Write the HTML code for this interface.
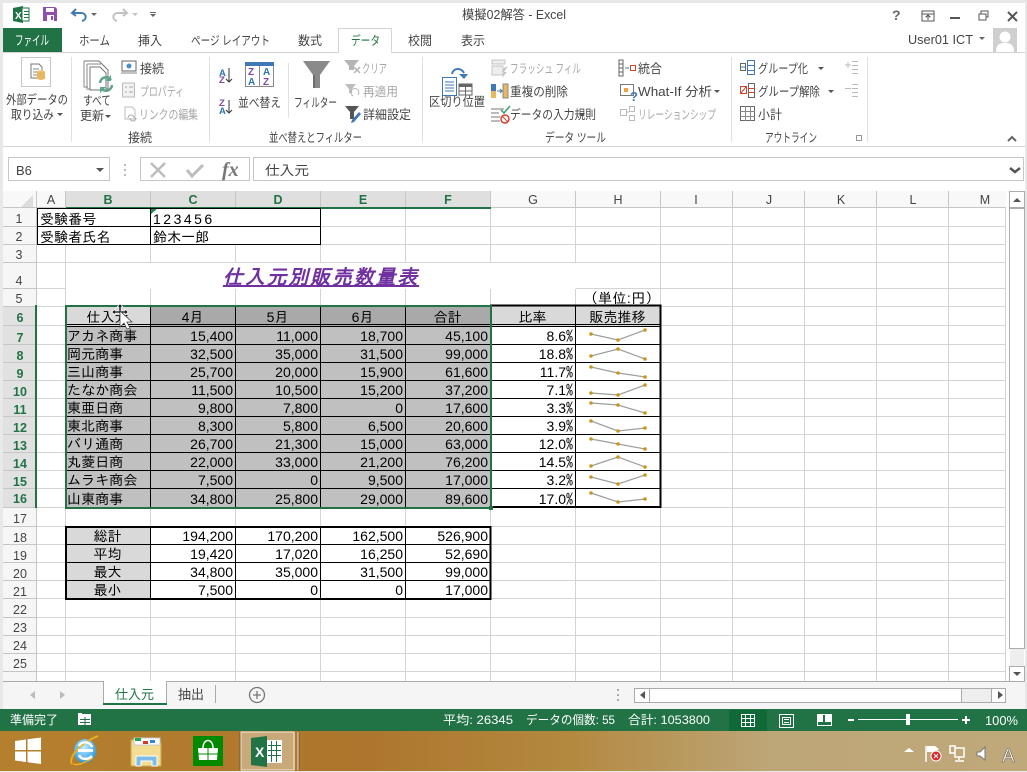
<!DOCTYPE html>
<html lang="ja"><head><meta charset="utf-8"><title>模擬02解答 - Excel</title>
<style>
html,body{margin:0;padding:0;width:1027px;height:772px;overflow:hidden;background:#fff}
svg{position:absolute;left:0;top:0}
svg text{font-family:"Liberation Sans","Noto Sans CJK JP",sans-serif;font-size:12.5px;fill:#444}
svg .g{fill:#a6a6a6}
svg .w{fill:#fff;font-size:13px}
svg .h{font-size:12.5px;fill:#444;text-anchor:middle}
svg .s{font-size:12.5px;fill:#217346;font-weight:bold;text-anchor:middle}
table{position:absolute;left:37px;top:208px;border-collapse:collapse;table-layout:fixed;width:624px;font-family:"Liberation Sans","IPAGothic",sans-serif;font-size:14px;color:#000}
td{padding:0 3px 0 1px;vertical-align:bottom;line-height:16px;white-space:nowrap;overflow:hidden;text-align:right}
td.l{text-align:left;letter-spacing:.1px}
td.c{text-align:center;letter-spacing:0}
tr.u td{padding-bottom:1px}
td i{font-style:normal;font-family:"IPAGothic",sans-serif}
.m{letter-spacing:1.5px}
.a{background:#d9d9d9}.b{background:#a9a9a9}.d{background:#c0c0c0}.e{background:#fff}
tr td.title{font-size:20px;line-height:22px;font-family:"IPAGothic",sans-serif;font-weight:bold;font-style:italic;text-decoration:underline;color:#7030a0;text-align:center;letter-spacing:1.8px;background:#fff;padding:0 0 1px 0}
</style></head><body>
<svg width="1027" height="772" shape-rendering="crispEdges">
<path stroke="#d4d4d4" fill="none" d="M37 226.5H1006M37 244.5H1006M37 262.5H1006M37 288.5H1006M37 306.5H1006M37 325.5H1006M37 344.5H1006M37 362.5H1006M37 380.5H1006M37 398.5H1006M37 416.5H1006M37 434.5H1006M37 452.5H1006M37 470.5H1006M37 488.5H1006M37 507.5H1006M37 526.5H1006M37 544.5H1006M37 562.5H1006M37 580.5H1006M37 598.5H1006M37 617.5H1006M37 635.5H1006M37 653.5H1006M37 671.5H1006M65.5 208V681M150.5 208V681M235.5 208V681M320.5 208V681M405.5 208V681M490.5 208V681M575.5 208V681M660.5 208V681M732.5 208V681M804.5 208V681M876.5 208V681M948.5 208V681M1005.5 208V681"/>
</svg>
<table>
<colgroup><col style="width:29px"><col style="width:85px"><col style="width:85px"><col style="width:85px"><col style="width:85px"><col style="width:85px"><col style="width:85px"><col style="width:85px"></colgroup>
<tr style="height:19px"><td colspan="2" class="l e" style="padding-left:3px">受験番号</td><td colspan="2" class="l e" style="padding-left:2px;letter-spacing:2.5px">123456</td><td colspan="4" style="background:none"></td></tr>
<tr style="height:18px"><td colspan="2" class="l e" style="padding-left:3px">受験者氏名</td><td colspan="2" class="l e" style="padding-left:2px">鈴木一郎</td><td colspan="4" style="background:none"></td></tr>
<tr style="height:18px"><td colspan="8"></td></tr>
<tr style="height:26px"><td></td><td colspan="6" class="title">仕入元別販売数量表</td><td></td></tr>
<tr class="u" style="height:18px"><td colspan="7"></td><td style="letter-spacing:.4px;padding-right:1px">（単位:円）</td></tr>
<tr class="u" style="height:19px"><td></td><td class="c a">仕入元</td><td class="c b m">4月</td><td class="c b m">5月</td><td class="c b m">6月</td><td class="c b">合計</td><td class="c a">比率</td><td class="c a">販売推移</td></tr>
<tr class="u" style="height:19px"><td></td><td class="l d">アカネ商事</td><td class="d">15,400</td><td class="d">11,000</td><td class="d">18,700</td><td class="d">45,100</td><td>8.6<i>%</i></td><td></td></tr>
<tr class="u" style="height:18px"><td></td><td class="l d">岡元商事</td><td class="d">32,500</td><td class="d">35,000</td><td class="d">31,500</td><td class="d">99,000</td><td>18.8<i>%</i></td><td></td></tr>
<tr class="u" style="height:18px"><td></td><td class="l d">三山商事</td><td class="d">25,700</td><td class="d">20,000</td><td class="d">15,900</td><td class="d">61,600</td><td>11.7<i>%</i></td><td></td></tr>
<tr class="u" style="height:18px"><td></td><td class="l d">たなか商会</td><td class="d">11,500</td><td class="d">10,500</td><td class="d">15,200</td><td class="d">37,200</td><td>7.1<i>%</i></td><td></td></tr>
<tr class="u" style="height:18px"><td></td><td class="l d">東亜日商</td><td class="d">9,800</td><td class="d">7,800</td><td class="d">0</td><td class="d">17,600</td><td>3.3<i>%</i></td><td></td></tr>
<tr class="u" style="height:18px"><td></td><td class="l d">東北商事</td><td class="d">8,300</td><td class="d">5,800</td><td class="d">6,500</td><td class="d">20,600</td><td>3.9<i>%</i></td><td></td></tr>
<tr class="u" style="height:18px"><td></td><td class="l d">バリ通商</td><td class="d">26,700</td><td class="d">21,300</td><td class="d">15,000</td><td class="d">63,000</td><td>12.0<i>%</i></td><td></td></tr>
<tr class="u" style="height:18px"><td></td><td class="l d">丸菱日商</td><td class="d">22,000</td><td class="d">33,000</td><td class="d">21,200</td><td class="d">76,200</td><td>14.5<i>%</i></td><td></td></tr>
<tr class="u" style="height:18px"><td></td><td class="l d">ムラキ商会</td><td class="d">7,500</td><td class="d">0</td><td class="d">9,500</td><td class="d">17,000</td><td>3.2<i>%</i></td><td></td></tr>
<tr style="height:18px"><td></td><td class="l d">山東商事</td><td class="d">34,800</td><td class="d">25,800</td><td class="d">29,000</td><td class="d">89,600</td><td>17.0<i>%</i></td><td></td></tr>
<tr style="height:19px"><td colspan="8"></td></tr>
<tr style="height:18px"><td></td><td class="c a">総計</td><td>194,200</td><td>170,200</td><td>162,500</td><td>526,900</td><td colspan="2"></td></tr>
<tr style="height:18px"><td></td><td class="c a">平均</td><td>19,420</td><td>17,020</td><td>16,250</td><td>52,690</td><td colspan="2"></td></tr>
<tr style="height:18px"><td></td><td class="c a">最大</td><td>34,800</td><td>35,000</td><td>31,500</td><td>99,000</td><td colspan="2"></td></tr>
<tr style="height:18px"><td></td><td class="c a">最小</td><td>7,500</td><td>0</td><td>0</td><td>17,000</td><td colspan="2"></td></tr>
</table>

<svg width="1027" height="772">
<g shape-rendering="crispEdges">
<rect width="1027" height="3" fill="#e8e8e8"/><rect y="0" width="3" height="772" fill="#e8e8e8"/><rect x="1025" width="2" height="772" fill="#e8e8e8"/>
<rect x="3" y="28" width="59" height="24" fill="#217346"/>
<path stroke="#d4d4d4" fill="none" d="M3 52.5H338M392 52.5H1025M338.5 28V53M391.5 28V53M338 28.5H392M3 146.5H1025"/>
<path stroke="#e1e1e1" fill="none" d="M71.5 57V142M209.5 57V142M288.5 63V118M422.5 57V142M731.5 57V142M867.5 57V142"/>
<rect x="21.5" y="57.5" width="29" height="29" fill="#fff" stroke="#c6c6c6"/>
<rect x="8.5" y="157.5" width="101" height="23" fill="#fff" stroke="#c6c6c6"/>
<rect x="140.5" y="157.5" width="109" height="23" fill="#fff" stroke="#c6c6c6"/>
<rect x="253.5" y="157.5" width="770" height="23" fill="#fff" stroke="#c6c6c6"/>
<path fill="#bbb" d="M124 164h2v2h-2zM124 169h2v2h-2zM124 174h2v2h-2z"/>
<rect x="3" y="191" width="1003" height="17" fill="#f8f8f8"/>
<rect x="3" y="208" width="33" height="473" fill="#f6f6f6"/>
<rect x="66" y="191" width="425" height="17" fill="#dfdfdf"/>
<rect x="3" y="306" width="33" height="202" fill="#e1e1e1"/>
<path stroke="#c6c6c6" fill="none" d="M3 207.5H1006M36.5 191V681M65.5 191V208M150.5 191V208M235.5 191V208M320.5 191V208M405.5 191V208M490.5 191V208M575.5 191V208M660.5 191V208M732.5 191V208M804.5 191V208M876.5 191V208M948.5 191V208M3 226.5H36M3 244.5H36M3 262.5H36M3 288.5H36M3 306.5H36M3 325.5H36M3 344.5H36M3 362.5H36M3 380.5H36M3 398.5H36M3 416.5H36M3 434.5H36M3 452.5H36M3 470.5H36M3 488.5H36M3 507.5H36M3 526.5H36M3 544.5H36M3 562.5H36M3 580.5H36M3 598.5H36M3 617.5H36M3 635.5H36M3 653.5H36M3 671.5H36"/>
<rect x="66" y="207" width="425" height="2" fill="#217346"/>
<rect x="35" y="305" width="2" height="203" fill="#217346"/>
<path stroke="#000" fill="none" d="M37.5 208V244.5H320.5V208M37.5 208.5H320M37 226.5H320M150.5 208V245"/>
<path stroke="#000" fill="none" d="M150.5 306V507M235.5 306V507M320.5 306V507M405.5 306V507M575.5 306V507M66 324.5H660M66 326.5H660M66 344.5H660M66 362.5H660M66 380.5H660M66 398.5H660M66 416.5H660M66 434.5H660M66 452.5H660M66 470.5H660M66 488.5H660"/>
<rect x="491" y="305.5" width="169.5" height="201.5" fill="none" stroke="#000" stroke-width="2"/>
<rect x="66" y="527" width="424.5" height="72" fill="none" stroke="#000" stroke-width="2"/>
<path stroke="#000" fill="none" d="M150.5 527V599M235.5 527V599M320.5 527V599M405.5 527V599M66 544.5H490M66 562.5H490M66 580.5H490"/>
<rect x="66" y="306" width="425" height="202" fill="none" stroke="#217346" stroke-width="2"/>
<rect x="489" y="506" width="4" height="4" fill="#217346"/>
<path fill="#1e8a50" d="M151 209h6l-6 5z"/>
<rect x="1009.5" y="191.5" width="15" height="16" fill="#fff" stroke="#ababab"/>
<rect x="1009.5" y="208.5" width="15" height="440" fill="#fff" stroke="#ababab"/>
<rect x="1010" y="649" width="14" height="18" fill="#eee"/>
<rect x="1009.5" y="666.5" width="15" height="15" fill="#fff" stroke="#ababab"/>
<rect x="3" y="681" width="1022" height="28" fill="#f5f5f5"/>
<path stroke="#ababab" d="M3 681.5H103M166 681.5H1025" fill="none"/>
<rect x="103" y="681" width="63" height="22" fill="#fff"/>
<path stroke="#ababab" fill="none" d="M103.5 681V704M166.5 681V704M215.5 685V703"/>
<rect x="103" y="703" width="64" height="2" fill="#217346"/>
<rect x="634.5" y="688.5" width="371" height="14" fill="#fff" stroke="#ababab"/>
<rect x="962" y="689" width="29" height="13" fill="#eee"/>
<path stroke="#ababab" fill="none" d="M649.5 688V703M961.5 688V703M991.5 688V703"/>
<rect x="617" y="689" width="2" height="2" fill="#aaa"/><rect x="617" y="694" width="2" height="2" fill="#aaa"/><rect x="617" y="699" width="2" height="2" fill="#aaa"/>
<rect x="0" y="709" width="1027" height="22" fill="#217346"/>
<rect x="729" y="710" width="38" height="21" fill="#0f6a37"/>
<path stroke="#fff" fill="none" d="M741.500 714.500H754.500V726.500H741.500ZM741 718.500H755M741 722.500H755M745.500 714V727M750.500 714V727"/>
<path stroke="#fff" fill="none" d="M779.500 714.500H793.500V727.500H779.500ZM782.500 717.500H790.500V724.500H782.500ZM784 719.500H789M784 722.500H789"/>
<path stroke="#fff" fill="none" d="M817.500 714.500H831.500V725.500H817.500Z"/><rect x="818" y="715" width="5" height="7" fill="#fff"/><rect x="825" y="715" width="6" height="7" fill="#fff"/>
<rect x="848" y="719" width="6" height="2" fill="#fff"/><rect x="858" y="719" width="100" height="1" fill="#fff"/><rect x="906" y="714" width="4" height="11" fill="#fff"/>
<rect x="962" y="719" width="8" height="2" fill="#fff"/><rect x="965" y="716" width="2" height="8" fill="#fff"/>
<rect x="78" y="714" width="13" height="11" fill="#fff"/><path stroke="#217346" d="M80 719.500H90M80 722.500H90M85 717V725"/>
<rect x="78" y="713" width="4" height="4" fill="#fff"/>
</g>
<defs><linearGradient id="tb" x1="0" x2="1" y1="0" y2="0"><stop offset="0" stop-color="#b5802e"/><stop offset=".35" stop-color="#ad752d"/><stop offset=".55" stop-color="#b3883f"/><stop offset=".75" stop-color="#bda677"/><stop offset="1" stop-color="#bfa87a"/></linearGradient>
<radialGradient id="ie" cx=".45" cy=".35" r=".7"><stop offset="0" stop-color="#bfefff"/><stop offset="1" stop-color="#1a8fe0"/></radialGradient></defs>
<rect y="731" width="1027" height="40" fill="url(#tb)"/><rect y="771" width="1027" height="1" fill="#e8e8e8"/>
<path fill="#fff" d="M15 741l11-1.500V750H15zM27.500 739.300L41 737.500V750H27.500zM15 751.500H26V762L15 760.500zM27.500 751.500H41V764L27.500 762.200z"/>
<ellipse cx="85" cy="751" rx="11" ry="12" fill="url(#ie)"/>
<path d="M72 764c-4-5 6-20 26-28" stroke="#e8b020" stroke-width="2" fill="none"/>
<path d="M73 764c6 2 12-2 20-6" stroke="#e8b020" stroke-width="1.500" fill="none"/>
<rect x="78" y="749" width="15" height="3" fill="#fff"/><path d="M79 746c2-5 11-5 13 1M79 755c2 5 9 5 13 1" stroke="#fff" stroke-width="2.500" fill="none"/>
<path fill="#f2dd92" stroke="#c9a850" d="M131 740h12l2 3h16v23h-30z"/>
<rect x="134" y="738" width="26" height="7" fill="#fff" stroke="#c9c9c9"/><rect x="135" y="738" width="6" height="3" fill="#1fa84f"/><rect x="143" y="741" width="5" height="3" fill="#d23a2a"/><rect x="150" y="740" width="5" height="3" fill="#2a8ad2"/>
<path fill="#7bbde8" stroke="#fff" d="M136 756h21v10h-5v-5h-11v5h-5z"/>
<rect x="193" y="736" width="30" height="30" fill="#008a00"/>
<path fill="#fff" d="M198 748h20l-1 12h-18z"/><path stroke="#008a00" d="M208 748v12M198 754h20" shape-rendering="crispEdges"/><path d="M203 748c0-10 10-10 10 0" stroke="#fff" stroke-width="1.500" fill="none"/>
<g shape-rendering="crispEdges"><rect x="241" y="732" width="54" height="38" fill="#c9a87a"/><rect x="241" y="732" width="53" height="38" fill="none" stroke="#f0e6d4"/><path stroke="#f0e6d4" d="M298 732V770" fill="none"/><path stroke="#6e5a40" d="M299 732V770M240 732V770" fill="none"/></g>
<path fill="#217346" d="M251 738l16-2v31l-16-2z"/><rect x="267" y="740" width="15" height="23" fill="#fff"/><path stroke="#217346" d="M271.500 741V762M276.500 741V762M268 745.500H281M268 750.500H281M268 755.500H281" shape-rendering="crispEdges"/>
<text x="255" y="757" style="font-size:14px;font-weight:bold;fill:#fff">X</text>
<path fill="#fff" d="M904 752l5-4 5 4z"/>
<path stroke="#fff" stroke-width="1.500" fill="none" d="M926 746v16"/><path fill="#fff" d="M927 746h8l4 3-4 3h-8z"/><circle cx="936" cy="756" r="5" fill="#d8262c" stroke="#fff"/><path d="M934 754l4 4M938 754l-4 4" stroke="#fff"/>
<path stroke="#fff" stroke-width="1.500" fill="none" d="M950 746h5v7h-5zM955 748h9v9h-9zM959 757v3M955 761h9"/>
<path fill="#fff" stroke="#777" d="M977 752h3l5-5v13l-5-4h-3z"/>
<text x="1002" y="762" style="font-size:19px;fill:#fff;stroke:#555;stroke-width:.5">A</text>
<path fill="#217346" d="M13 8l10-2v17l-10-2z"/><rect x="22" y="8" width="7" height="13" fill="#fff" stroke="#217346"/><path stroke="#217346" d="M24 11.500H29M24 14.500H29M24 17.500H29" shape-rendering="crispEdges"/><text x="15" y="19" style="font-size:10px;font-weight:bold;fill:#fff">X</text>
<path fill="#8e4fb3" d="M43 7h12l2 2v12H43z"/><rect x="46" y="8" width="8" height="4" fill="#fff"/><rect x="47" y="15" width="7" height="6" fill="#fff"/><rect x="51" y="16" width="2" height="4" fill="#8e4fb3"/>
<path d="M76 9l-4 4 4 3M73 13h8c6 0 6 7 1 8" stroke="#3f78b5" stroke-width="2" fill="none"/>
<path d="M91 13h6l-3 3z" fill="#666"/>
<path d="M123 9l4 4-4 3M126 13h-8c-6 0-6 7-1 8" stroke="#c2c2c2" stroke-width="2" fill="none"/>
<path d="M132 13h6l-3 3z" fill="#c2c2c2"/>
<path d="M150 12h6v1h-6zM150 14h6l-3 3z" fill="#666"/>
<path d="M922 11h12v10h-12zM922 14h12M928 20v-5M925.500 17.500l2.500-2.500 2.500 2.500" stroke="#555" fill="none" shape-rendering="crispEdges"/>
<rect x="950" y="17" width="10" height="2" fill="#555"/>
<path d="M979 14h7v6h-7zM981 14v-3h7v6h-2" stroke="#555" fill="none" stroke-width="1.200" shape-rendering="crispEdges"/>
<path d="M1008 12l9 9M1017 12l-9 9" stroke="#555" stroke-width="2"/>
<path d="M979 37h6l-3 3z" fill="#666"/>
<rect x="993" y="28" width="24" height="24" fill="#cfcfcf"/><circle cx="1005" cy="37" r="5.500" fill="#fff"/><path d="M996 52c0-8 4-9 9-9s9 1 9 9z" fill="#fff"/>
<path d="M31 64h8l3 3v11H31z" fill="#fff" stroke="#777"/><path d="M33 69h6M33 72h6M33 75h5" stroke="#888"/><ellipse cx="41" cy="72" rx="4" ry="1.800" fill="#f2c468"/><path d="M37 72v6c0 2.500 8 2.500 8 0v-6" fill="#e8b860"/>
<path d="M84 61h15l9 9v19H88" fill="#fff" stroke="#777"/><path d="M87 64h14M84 61v26h4M87 64v26" stroke="#888" fill="none"/><path d="M90 67h10l6 6v17H90z" fill="#fff" stroke="#777"/>
<path d="M100 83a6 6 0 0 1 11-3M112 85a6 6 0 0 1-11 3" stroke="#5fa58a" stroke-width="2.500" fill="none"/><path d="M111 75v6h-6zM100 93v-6h6z" fill="#5fa58a"/>
<rect x="122" y="61" width="14" height="10" fill="#fff" stroke="#666"/><path d="M121 73h16" stroke="#888"/><circle cx="129" cy="66" r="2.500" fill="#4a90c8"/>
<rect x="122.500" y="83" width="12" height="14" fill="#f2f2f2" stroke="#bbb"/><path d="M125 87h2M125 92h2M129 87h4M129 92h4" stroke="#aaa"/>
<path d="M125 107h7l3 3v9h-10z" fill="#fff" stroke="#bbb"/><path d="M128 118a3 3 0 0 1 6 0M130 118a3 3 0 0 0 6 0" stroke="#aaa" fill="none"/>
<text x="219" y="76" style="font-size:9.500px;fill:#2e75b6;font-weight:bold">A</text><text x="219" y="83" style="font-size:9.500px;fill:#7b4ca0;font-weight:bold">Z</text>
<path d="M229 68v14M226 79l3 3 3-3" stroke="#333" fill="none"/>
<text x="219" y="106" style="font-size:9.500px;fill:#7b4ca0;font-weight:bold">Z</text><text x="219" y="114" style="font-size:9.500px;fill:#2e75b6;font-weight:bold">A</text>
<path d="M229 100v13M226 110l3 3 3-3" stroke="#333" fill="none"/>
<rect x="245.500" y="62.500" width="28" height="24" fill="#fff" stroke="#888"/><rect x="245" y="62" width="29" height="4" fill="#3f78b5"/><path d="M259.500 66V87" stroke="#888"/>
<text x="248" y="75" style="font-size:10px;font-weight:bold;fill:#7b4ca0">Z</text><text x="248" y="85" style="font-size:10px;font-weight:bold;fill:#2e75b6">A</text><text x="263" y="75" style="font-size:10px;font-weight:bold;fill:#2e75b6">A</text><text x="263" y="85" style="font-size:10px;font-weight:bold;fill:#7b4ca0">Z</text>
<path d="M303 61h27l-10 14v13h-7V75z" fill="#8a8a8a"/><path d="M313 75h2v13h-2z" fill="#6f6f6f"/>
<path d="M344 60h15l-5 6v4h-5v-4z" fill="#b5b5b5"/><path d="M354 67l6 6M360 67l-6 6" stroke="#b5b5b5" stroke-width="1.500"/>
<path d="M345 84h11l-4 5v4h-3v-4z" fill="#bdbdbd"/><path d="M353 96a4 4 0 1 1 5-1" stroke="#b5b5b5" fill="none"/>
<path d="M345 106h14l-5 6v7h-4v-7z" fill="#555"/><path d="M352 120l7-8 2 2-7 8-3 1z" fill="#3f78b5"/>
<rect x="442.500" y="77.500" width="14" height="18" fill="#fff" stroke="#3f78b5"/><path d="M445 82h9M445 85h9M445 88h9M445 91h9" stroke="#3f78b5"/>
<rect x="459" y="84" width="13" height="11" fill="#fff" stroke="#666"/><rect x="459" y="84" width="13" height="3" fill="#666"/><path d="M465.500 87v8M459 91h13" stroke="#666"/>
<path d="M452 74c1-6 9-7 12-1" stroke="#3f78b5" stroke-width="2" fill="none"/><path d="M459 74h9l-4 5z" fill="#3f78b5"/>
<path d="M492 60h13v4h-13zM492 66h11v9h-11z" fill="#eee" stroke="#c4c4c4"/><path d="M504 68l4-2-4 6h3l-5 6 2-6h-2z" fill="#c4c4c4"/>
<rect x="491" y="84" width="5" height="14" fill="#3f78b5"/><rect x="491" y="91" width="5" height="7" fill="#e8b860"/><rect x="503" y="84" width="5" height="14" fill="#e8b860" stroke="#888"/><path d="M497 91h5M500 89l2 2-2 2" stroke="#3f78b5" fill="none"/>
<path d="M491 109h13M491 113h8M491 117h9M491 121h9" stroke="#777" fill="none"/><path d="M501 110l3 3 6-7" stroke="#3aa070" stroke-width="1.500" fill="none"/><circle cx="505" cy="119" r="4" fill="#fff" stroke="#d0432c" stroke-width="1.500"/><path d="M502.500 116.500l5 5" stroke="#d0432c"/>
<path d="M619 60h4v16h-4zM619 64h4M619 68h4M619 72h4" fill="#fff" stroke="#666" shape-rendering="crispEdges"/><path d="M625 68h4" stroke="#3f78b5"/><rect x="630.500" y="65.500" width="5" height="5" fill="#fff" stroke="#d0432c" shape-rendering="crispEdges"/>
<rect x="620.500" y="84.500" width="13" height="11" fill="#fff" stroke="#777" shape-rendering="crispEdges"/><rect x="624" y="88" width="4" height="4" fill="#f2a040"/><text x="630" y="101" style="font-size:13px;font-weight:bold;fill:#3f78b5">?</text>
<rect x="620.500" y="109.500" width="6" height="6" fill="#fff" stroke="#bbb"/><rect x="629.500" y="106.500" width="5" height="5" fill="#fff" stroke="#bbb"/><rect x="629.500" y="115.500" width="5" height="5" fill="#fff" stroke="#bbb"/><path d="M627 112h2" stroke="#bbb"/>
<g shape-rendering="crispEdges" fill="none"><rect x="740.500" y="63.500" width="5" height="7" stroke="#666"/><rect x="747.500" y="60.500" width="7" height="14" stroke="#3f78b5"/><path d="M747 65.500h8M747 70.500h8M741 67h4" stroke="#3f78b5"/>
<rect x="740.500" y="86.500" width="6" height="7" stroke="#d0432c"/><rect x="748.500" y="83.500" width="6" height="14" stroke="#666"/><path d="M748 88.500h7M748 92.500h7M741 93l5-6" stroke="#d0432c"/>
<rect x="740.500" y="106.500" width="14" height="14" stroke="#666"/><path d="M745.500 106v15M750.500 106v15M740 111.500h15M740 116.500h15" stroke="#888"/>
<path d="M845 65h6M848 62v6M852 61.500h6M852 65.500h6M852 69.500h6M852 73.500h6" stroke="#bbb"/><path d="M845 88.500h6M852 84.500h6M852 88.500h6M852 92.500h6M852 96.500h6" stroke="#bbb"/>
<path d="M856.500 135.500h5v5h-5z" stroke="#999"/></g>
<path d="M1008 141l4-4 4 4" stroke="#666" stroke-width="2" fill="none"/>
<path fill="#555" d="M57 113h6l-3 3zM105 115h6l-3 3zM579 113h6l-3 3zM714 90h6l-3 3zM818 67h6l-3 3zM828 90h6l-3 3zM96 168h8l-4 4z"/>
<path d="M1010 168l5 4 5-4" stroke="#555" stroke-width="2.500" fill="none"/>
<path d="M151 163l14 14M165 163l-14 14" stroke="#bdbdbd" stroke-width="2.500"/>
<path d="M187 170l5 6 11-11" stroke="#bdbdbd" stroke-width="3" fill="none"/>
<path fill="#555" d="M1013 202l4-4 4 4zM1013 672h8l-4 4zM645 691v8l-5-4zM998 691v8l5-4z"/>
<path fill="#bbb" d="M35 691v8l-5-4zM60 691v8l5-4z"/>
<circle cx="257" cy="695" r="7.500" fill="none" stroke="#777" stroke-width="1.300"/><path d="M253 695h8M257 691v8" stroke="#777" stroke-width="1.300"/>
<path fill="#dcdcdc" d="M33 195v12H21z"/>
<g stroke="#9e9e9e" stroke-width="1.200" fill="none"><path d="M591 334L618 340L645 330M591 356L618 349L645 359M591 367L618 373L645 377M591 393L618 395L645 385M591 403L618 405L645 413M591 421L618 431L645 428M591 439L618 444L645 449M591 466L618 457L645 467M591 477L618 484L645 475M591 493L618 502L645 499"/></g>
<g fill="#c8961e"><circle cx="591" cy="334" r="1.800"/><circle cx="618" cy="340" r="1.800"/><circle cx="645" cy="330" r="1.800"/><circle cx="591" cy="356" r="1.800"/><circle cx="618" cy="349" r="1.800"/><circle cx="645" cy="359" r="1.800"/><circle cx="591" cy="367" r="1.800"/><circle cx="618" cy="373" r="1.800"/><circle cx="645" cy="377" r="1.800"/><circle cx="591" cy="393" r="1.800"/><circle cx="618" cy="395" r="1.800"/><circle cx="645" cy="385" r="1.800"/><circle cx="591" cy="403" r="1.800"/><circle cx="618" cy="405" r="1.800"/><circle cx="645" cy="413" r="1.800"/><circle cx="591" cy="421" r="1.800"/><circle cx="618" cy="431" r="1.800"/><circle cx="645" cy="428" r="1.800"/><circle cx="591" cy="439" r="1.800"/><circle cx="618" cy="444" r="1.800"/><circle cx="645" cy="449" r="1.800"/><circle cx="591" cy="466" r="1.800"/><circle cx="618" cy="457" r="1.800"/><circle cx="645" cy="467" r="1.800"/><circle cx="591" cy="477" r="1.800"/><circle cx="618" cy="484" r="1.800"/><circle cx="645" cy="475" r="1.800"/><circle cx="591" cy="493" r="1.800"/><circle cx="618" cy="502" r="1.800"/><circle cx="645" cy="499" r="1.800"/></g>
<path d="M120 304l3 3h-2v4h4v-2l3 3-3 3v-2h-4v1h-2v-1h-4v2l-3-3 3-3v2h4v-4h-2z" fill="#000" stroke="#fff" stroke-width=".7"/>
<path d="M120 311v16l4-4 3 6 3-1-3-6h5z" fill="#fff" stroke="#444" stroke-width=".8"/>
<text x="462" y="19" textLength="104" lengthAdjust="spacingAndGlyphs">模擬02解答 - Excel</text>
<text x="892" y="20" style="font-size:14px;font-weight:bold;fill:#666">?</text>
<text x="15" y="45" class="w" textLength="34" lengthAdjust="spacingAndGlyphs">ファイル</text>
<text x="79" y="45" textLength="31" lengthAdjust="spacingAndGlyphs">ホーム</text>
<text x="138" y="45" textLength="24" lengthAdjust="spacingAndGlyphs">挿入</text>
<text x="191" y="45" textLength="79" lengthAdjust="spacingAndGlyphs">ページ レイアウト</text>
<text x="298" y="45" textLength="24" lengthAdjust="spacingAndGlyphs">数式</text>
<text x="351" y="45" textLength="29" lengthAdjust="spacingAndGlyphs" style="fill:#217346">データ</text>
<text x="408" y="45" textLength="24" lengthAdjust="spacingAndGlyphs">校閲</text>
<text x="461" y="45" textLength="24" lengthAdjust="spacingAndGlyphs">表示</text>
<text x="908" y="44" textLength="65" lengthAdjust="spacingAndGlyphs">User01 ICT</text>
<text x="6" y="104" textLength="62" lengthAdjust="spacingAndGlyphs">外部データの</text>
<text x="11" y="119" textLength="43" lengthAdjust="spacingAndGlyphs">取り込み</text>
<text x="83" y="105" textLength="28" lengthAdjust="spacingAndGlyphs">すべて</text>
<text x="80" y="120" textLength="24" lengthAdjust="spacingAndGlyphs">更新</text>
<text x="140" y="73" textLength="24" lengthAdjust="spacingAndGlyphs">接続</text>
<text x="140" y="96" class="g" textLength="44" lengthAdjust="spacingAndGlyphs">プロパティ</text>
<text x="139" y="119" class="g" textLength="59" lengthAdjust="spacingAndGlyphs">リンクの編集</text>
<text x="128" y="142" textLength="24" lengthAdjust="spacingAndGlyphs">接続</text>
<text x="238" y="107" textLength="43" lengthAdjust="spacingAndGlyphs">並べ替え</text>
<text x="294" y="107" textLength="43" lengthAdjust="spacingAndGlyphs">フィルター</text>
<text x="362" y="73" class="g" textLength="25" lengthAdjust="spacingAndGlyphs">クリア</text>
<text x="363" y="96" class="g" textLength="35" lengthAdjust="spacingAndGlyphs">再適用</text>
<text x="363" y="119" textLength="48" lengthAdjust="spacingAndGlyphs">詳細設定</text>
<text x="269" y="142" textLength="93" lengthAdjust="spacingAndGlyphs">並べ替えとフィルター</text>
<text x="429" y="106" textLength="56" lengthAdjust="spacingAndGlyphs">区切り位置</text>
<text x="510" y="73" class="g" textLength="71" lengthAdjust="spacingAndGlyphs">フラッシュ フィル</text>
<text x="510" y="96" textLength="58" lengthAdjust="spacingAndGlyphs">重複の削除</text>
<text x="510" y="119" textLength="86" lengthAdjust="spacingAndGlyphs">データの入力規則</text>
<text x="638" y="73" textLength="24" lengthAdjust="spacingAndGlyphs">統合</text>
<text x="638" y="96" textLength="74" lengthAdjust="spacingAndGlyphs">What-If 分析</text>
<text x="638" y="119" class="g" textLength="78" lengthAdjust="spacingAndGlyphs">リレーションシップ</text>
<text x="545" y="142" textLength="61" lengthAdjust="spacingAndGlyphs">データ ツール</text>
<text x="758" y="73" textLength="50" lengthAdjust="spacingAndGlyphs">グループ化</text>
<text x="758" y="96" textLength="62" lengthAdjust="spacingAndGlyphs">グループ解除</text>
<text x="758" y="119" textLength="24" lengthAdjust="spacingAndGlyphs">小計</text>
<text x="765" y="142" textLength="52" lengthAdjust="spacingAndGlyphs">アウトライン</text>
<text x="16" y="175" style="font-size:13px">B6</text>
<text x="222" y="176" style="font-family:'Liberation Serif',serif;font-size:20px;font-style:italic;font-weight:bold;fill:#777">fx</text>
<text x="265" y="175" style="font-size:13px" textLength="44" lengthAdjust="spacingAndGlyphs">仕入元</text>
<text class="h" x="51" y="204">A</text><text class="s" x="108" y="204">B</text><text class="s" x="193" y="204">C</text><text class="s" x="278" y="204">D</text><text class="s" x="363" y="204">E</text><text class="s" x="448" y="204">F</text><text class="h" x="533" y="204">G</text><text class="h" x="618" y="204">H</text><text class="h" x="696" y="204">I</text><text class="h" x="769" y="204">J</text><text class="h" x="841" y="204">K</text><text class="h" x="913" y="204">L</text><text class="h" x="985" y="204">M</text>
<text class="h" x="19" y="223">1</text><text class="h" x="19" y="241">2</text><text class="h" x="19" y="259">3</text><text class="h" x="19" y="285">4</text><text class="h" x="19" y="303">5</text>
<text class="s" x="20" y="322">6</text><text class="s" x="20" y="342">7</text><text class="s" x="20" y="360">8</text><text class="s" x="20" y="378">9</text><text class="s" x="20" y="396">10</text><text class="s" x="20" y="414">11</text><text class="s" x="20" y="432">12</text><text class="s" x="20" y="450">13</text><text class="s" x="20" y="468">14</text><text class="s" x="20" y="486">15</text><text class="s" x="20" y="503">16</text>
<text class="h" x="20" y="523">17</text><text class="h" x="20" y="542">18</text><text class="h" x="20" y="560">19</text><text class="h" x="20" y="578">20</text><text class="h" x="20" y="596">21</text><text class="h" x="20" y="614">22</text><text class="h" x="20" y="632">23</text><text class="h" x="20" y="650">24</text><text class="h" x="20" y="668">25</text>
<text x="115" y="699" style="font-size:13px;fill:#217346" textLength="39" lengthAdjust="spacingAndGlyphs">仕入元</text>
<text x="178" y="699" style="font-size:13px" textLength="26" lengthAdjust="spacingAndGlyphs">抽出</text>
<text x="10" y="724" class="w" style="font-size:12px" textLength="48" lengthAdjust="spacingAndGlyphs">準備完了</text>
<text x="443" y="724" class="w" style="font-size:12px" textLength="70" lengthAdjust="spacingAndGlyphs">平均: 26345</text>
<text x="526" y="724" class="w" style="font-size:12px" textLength="89" lengthAdjust="spacingAndGlyphs">データの個数: 55</text>
<text x="628" y="724" class="w" style="font-size:12px" textLength="82" lengthAdjust="spacingAndGlyphs">合計: 1053800</text>
<text x="985" y="725" class="w" style="font-size:12.500px" textLength="33" lengthAdjust="spacingAndGlyphs">100%</text>
</svg>
</body></html>
